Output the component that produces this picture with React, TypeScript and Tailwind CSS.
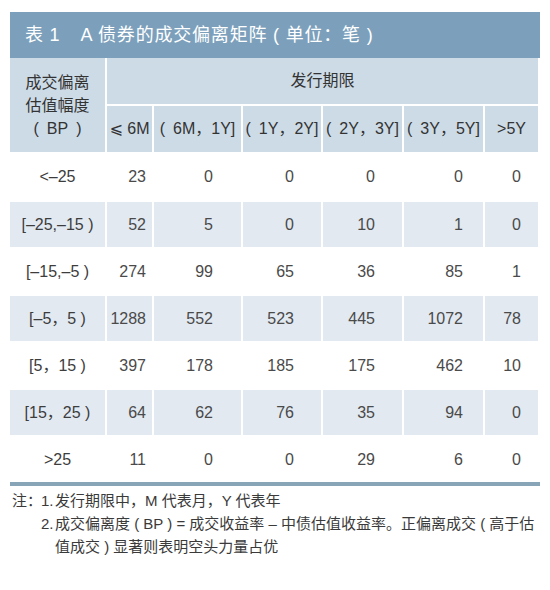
import React from "react";

const FONT = '"Liberation Sans", "Noto Sans CJK SC", "DejaVu Sans", sans-serif';

const cols = "grid grid-cols-[95px_45px_87px_78px_79px_79px_53px] gap-x-[2px]";

type Row = { label: string; vals: string[]; shaded: boolean; h: string };

const rows: Row[] = [
  { label: "<–25", vals: ["23", "0", "0", "0", "0", "0"], shaded: false, h: "h-[46px]" },
  { label: "[–25,–15 )", vals: ["52", "5", "0", "10", "1", "0"], shaded: true, h: "h-[45px]" },
  { label: "[–15,–5 )", vals: ["274", "99", "65", "36", "85", "1"], shaded: false, h: "h-[45px]" },
  { label: "[–5，5 )", vals: ["1288", "552", "523", "445", "1072", "78"], shaded: true, h: "h-[45px]" },
  { label: "[5，15 )", vals: ["397", "178", "185", "175", "462", "10"], shaded: false, h: "h-[45px]" },
  { label: "[15，25 )", vals: ["64", "62", "76", "35", "94", "0"], shaded: true, h: "h-[45px]" },
  { label: ">25", vals: ["11", "0", "0", "29", "6", "0"], shaded: false, h: "h-[45px]" },
];

const padR = ["pr-[6px]", "pr-[28px]", "pr-[27px]", "pr-[27px]", "pr-[20px]", "pr-[17px]"];

const subHeads = [
  "⩽ 6M",
  "(\u20026M，1Y]",
  "(\u20021Y，2Y]",
  "(\u20022Y，3Y]",
  "(\u20023Y，5Y]",
  ">5Y",
];

const bpLabel = "(\u2002BP\u2002)";

export default function App() {
  return (
    <div
      className="w-[550px] h-[590px] bg-white pt-[12px] px-[10px] text-[#3d3d3d]"
      style={{ fontFamily: FONT }}
    >
      {/* title bar */}
      <div className="h-[46px] bg-[#7ca0bb] flex items-center pl-[15px] text-white text-[18px] tracking-[0.8px] whitespace-pre">
        <span>表 1</span>
        <span className="ml-[20px]">A 债券的成交偏离矩阵 ( 单位：笔 )</span>
      </div>

      {/* header */}
      <div className={`${cols} grid-rows-[46px_46px] gap-y-[2px]`}>
        <div className="row-span-2 bg-[#cddbe6] flex flex-col items-center justify-center text-[16px] leading-[23px] text-[#333]">
          <span>成交偏离</span>
          <span>估值幅度</span>
          <span className="whitespace-nowrap">{bpLabel}</span>
        </div>
        <div className="col-span-6 bg-[#cddbe6] flex items-center justify-center text-[16px] text-[#333]">
          发行期限
        </div>
        {subHeads.map((t) => (
          <div
            key={t}
            className="bg-[#cddbe6] flex items-center justify-center text-[16px] whitespace-nowrap text-[#333]"
          >
            {t}
          </div>
        ))}
      </div>

      {/* body */}
      <div className="mt-[2px] flex flex-col gap-y-[2px]">
        {rows.map((r) => (
          <div key={r.label} className={`${cols} ${r.h}`}>
            <div
              className={`flex items-center justify-center text-[16px] whitespace-pre ${
                r.shaded ? "bg-[#e2e9f1]" : ""
              }`}
            >
              {r.label}
            </div>
            {r.vals.map((v, i) => (
              <div
                key={i}
                className={`flex items-center justify-end text-[16px] text-[#4a4a4a] ${padR[i]} ${
                  r.shaded ? "bg-[#e2e9f1]" : ""
                }`}
              >
                {v}
              </div>
            ))}
          </div>
        ))}
      </div>

      {/* bottom rule */}
      <div className="h-[4px] bg-[#88a4b7]" />

      {/* notes */}
      <div className="mt-[3px] pl-[2px] flex text-[15px] leading-[23px] text-[#3a3a3a]">
        <span className="w-[29px] shrink-0">注：</span>
        <div className="flex flex-col">
          <div className="flex">
            <span className="w-[14px] shrink-0">1.</span>
            <span className="whitespace-nowrap">发行期限中，M 代表月，Y 代表年</span>
          </div>
          <div className="flex">
            <span className="w-[14px] shrink-0">2.</span>
            <div className="flex flex-col">
              <span className="whitespace-nowrap">
                成交偏离度 ( BP ) = 成交收益率 – 中债估值收益率。正偏离成交 ( 高于估
              </span>
              <span className="whitespace-nowrap">值成交 ) 显著则表明空头力量占优</span>
            </div>
          </div>
        </div>
      </div>
    </div>
  );
}
